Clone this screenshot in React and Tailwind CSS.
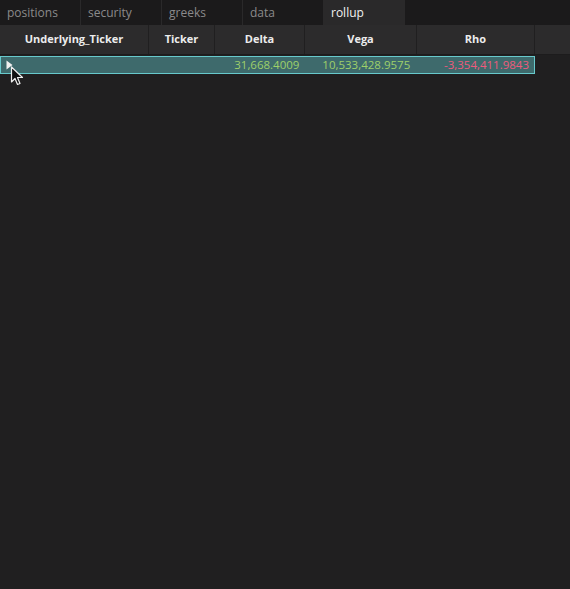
import { useState } from "react";

const tabs = ["positions", "security", "greeks", "data", "rollup"];

const columns = [
  { name: "Underlying_Ticker", width: "w-[149px]" },
  { name: "Ticker", width: "w-[66px]" },
  { name: "Delta", width: "w-[90px]" },
  { name: "Vega", width: "w-[112px]" },
  { name: "Rho", width: "w-[118px]" },
];

function Cursor() {
  return (
    <svg
      className="absolute left-[10px] top-[66px]"
      width="14"
      height="21"
      viewBox="0 0 14 21"
    >
      <path
        d="M1.5 1 L1.5 16 L5 12.5 L7.5 18.5 L10 17.5 L7.5 11.5 L12.5 11.5 Z"
        fill="#111"
        stroke="#eee"
        strokeWidth="1.2"
        strokeLinejoin="round"
      />
    </svg>
  );
}

export default function App() {
  const [activeTab, setActiveTab] = useState("rollup");

  return (
    <div
      className="relative w-[570px] h-[589px] bg-[#201f20] overflow-hidden"
      style={{ fontFamily: '"Open Sans", "Noto Sans", sans-serif' }}
    >
      {/* tab bar */}
      <div className="flex h-[25px] bg-[#1b1a1b]">
        {tabs.map((tab) => (
          <button
            key={tab}
            type="button"
            onClick={() => setActiveTab(tab)}
            className={`w-[81px] h-full text-left pl-[7px] text-[12px] border-r border-[#2a292a] ${
              activeTab === tab
                ? "bg-[#2a292a] text-[#f2f2f2]"
                : "text-[#8b8a8b]"
            }`}
          >
            {tab}
          </button>
        ))}
      </div>

      {/* header */}
      <div className="flex h-[30px] bg-[#2c2b2c] border-b border-[#1d1c1d]">
        {columns.map((col) => (
          <div
            key={col.name}
            className={`${col.width} flex items-center justify-center border-r border-[#201f20] text-[11px] font-bold text-[#ececec]`}
          >
            {col.name}
          </div>
        ))}
        <div className="flex-1" />
      </div>

      {/* rollup row */}
      <div className="mt-[1px] flex h-[18px] w-[535px] items-center bg-[#3e6a6c] border border-[#67c9cc] text-[11.5px]">
        <div className="w-[148px] pl-[5px] flex items-center">
          <svg width="7" height="10" viewBox="0 0 7 10">
            <path d="M0.5 0.5 L6.5 5 L0.5 9.5 Z" fill="#f0f0f0" />
          </svg>
        </div>
        <div className="w-[66px]" />
        <div className="w-[90px] text-right pr-[5px] text-[#9fd06a]">
          31,668.4009
        </div>
        <div className="w-[112px] text-right pr-[6px] text-[#9fd06a]">
          10,533,428.9575
        </div>
        <div className="w-[118px] text-right pr-[5px] text-[#ef5b7d]">
          -3,354,411.9843
        </div>
      </div>

      <Cursor />
    </div>
  );
}
